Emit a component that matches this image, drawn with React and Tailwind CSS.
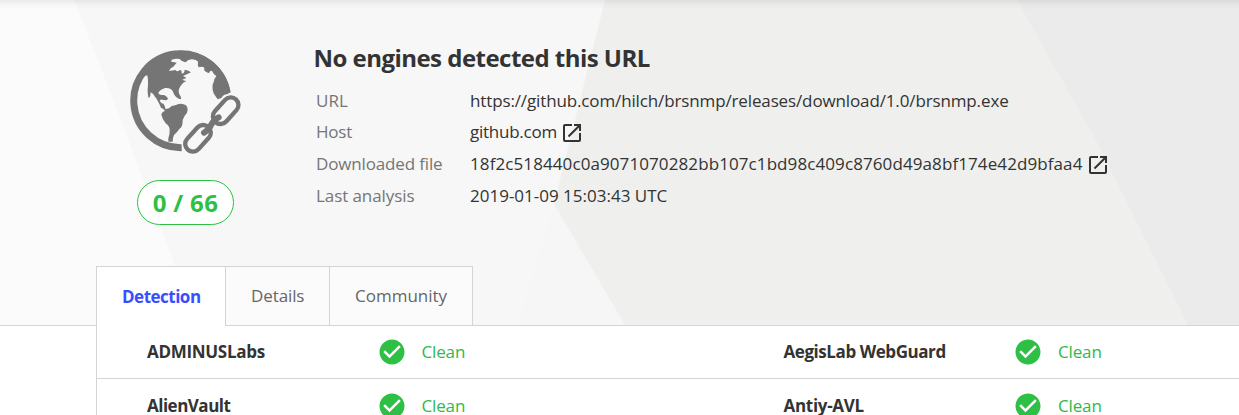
import React from 'react';
import { MdCheckCircle, MdOpenInNew } from 'react-icons/md';

function Backdrop() {
  return (
    <svg className="absolute inset-0 h-[325px] w-[1239px]" viewBox="0 0 1239 325" aria-hidden="true">
      <defs>
        <linearGradient id="top-shade" x1="0" y1="0" x2="0" y2="1">
          <stop offset="0" stopColor="#000" stopOpacity="0.07" />
          <stop offset="0.5" stopColor="#000" stopOpacity="0.02" />
          <stop offset="1" stopColor="#000" stopOpacity="0" />
        </linearGradient>
      </defs>
      <rect width="1239" height="325" fill="#f7f7f7" />
      <path d="M0 0H74L114 101L197 325H0Z" fill="#fbfbfb" />
      <path d="M554 204L518 325H640V204Z" fill="#f6f6f6" />
      <path d="M605 0L554 204L625 325H1239V0Z" fill="#efefed" />
      <path d="M1017 0L1097 142L1188 325H1239V0Z" fill="#ebebeb" />
      <rect width="1239" height="10" fill="url(#top-shade)" />
    </svg>
  );
}

function GlobeLink() {
  return (
    <svg className="h-[105px] w-[112px]" viewBox="59 57 336 315" fill="none" aria-hidden="true">
      <path d="M214 353A141 141 0 1 1 350 187" stroke="#757575" strokeWidth="21" />
      <path
        fill="#757575"
        d="M96 140L111 136Q114 150 113 165Q110 190 115 204Q120 204 121 187Q128 190 134 200Q141 208 144 216Q148 224 152 233Q160 236 164 243Q154 246 153 254Q156 268 166 280Q178 288 178 300Q179 312 174 325V335H187Q187 323 191 315Q202 305 207 297Q218 290 217 270Q221 258 230 248Q235 236 227 226Q218 220 205 222Q194 226 184 228Q176 238 166 238Q163 226 160 222Q151 220 148 212Q151 206 160 210Q170 212 173 206Q168 196 158 195Q145 195 144 188Q151 177 165 174Q182 172 188 185Q192 200 207 207Q216 209 210 198Q202 186 207 175Q213 160 228 153Q219 152 216 149L228 144Q222 140 218 138Q232 132 242 127Q232 119 223 119Q222 132 214 130Q215 120 208 120Q200 128 196 120L176 123Q180 113 189 110L199 98Q190 95 183 96L184 89Q196 84 208 87Q214 96 226 97Q231 90 243 88Q260 88 263 96Q261 106 265 112Q275 108 282 113Q280 124 289 126Q296 134 300 122L306 124Q309 134 318 138Q311 146 310 157Q305 164 307 180Q309 190 313 195L322 208L333 204Q339 194 350 193L361 187A150 150 0 0 0 212 62A150 150 0 0 0 82 138Z"
      />
      <g stroke="#757575" strokeWidth="13">
        <rect x="300" y="219" width="92" height="46" rx="23" transform="rotate(-48 346 242)" />
        <rect x="217" y="302" width="92" height="46" rx="23" transform="rotate(-48 263 325)" />
        <path d="M281 308Q299 296 303 283Q314 266 325 262" strokeWidth="18" strokeLinecap="round" />
      </g>
    </svg>
  );
}

function Info({ label, labelClass, children }) {
  return (
    <div className="flex h-[31.700px] items-center text-[17px] leading-8 whitespace-nowrap">
      <dt className={`w-[154px] shrink-0 text-[#757575] ${labelClass}`}>{label}</dt>
      <dd className="flex items-center text-[#333]">{children}</dd>
    </div>
  );
}

function Result({ name, nameClass }) {
  return (
    <div className="flex h-[52px] w-[636.500px] shrink-0 items-center text-[17px] whitespace-nowrap">
      <span className={`w-[229.500px] font-bold text-[#333] ${nameClass}`}>{name}</span>
      <MdCheckCircle className="mr-[15px] size-[30px] text-[#2dc044]" />
      <span className="tracking-[-0.150px] text-[#2eb94a]">Clean</span>
    </div>
  );
}

export default function App() {
  return (
    <main className="h-[415px] w-[1239px] overflow-hidden bg-white font-['Open_Sans','Noto_Sans',sans-serif]">
      <header className="relative h-[326px] border-b border-[#d4d4d4]">
        <Backdrop />
        <div className="relative flex h-[266px] pl-[130px]">
          <div className="flex w-[183.500px] flex-col pt-[49px]">
            <GlobeLink />
            <div className="mt-[26px] ml-[7px] flex h-[45px] w-[97px] items-center justify-center rounded-full border border-[#2dc044] bg-white text-[24px] font-bold tracking-[0.300px] text-[#2dc044]">
              0 / 66
            </div>
          </div>
          <div className="pt-10">
            <h1 className="h-[44.700px] text-[24px] leading-9 font-bold tracking-[-0.530px] text-[#333]">No engines detected this URL</h1>
            <dl className="pl-[2.500px]">
              <Info label="URL" labelClass="tracking-[0.080px]">
                <span className="tracking-[-0.130px]">https://github.com/hilch/brsnmp/releases/download/1.0/brsnmp.exe</span>
              </Info>
              <Info label="Host" labelClass="tracking-[-0.200px]">
                <span className="tracking-[-0.250px]">github.com</span>
                <MdOpenInNew className="mt-[2px] ml-[3px] size-6" />
              </Info>
              <Info label="Downloaded file" labelClass="tracking-[-0.150px]">
                <span className="tracking-[0.095px]">18f2c518440c0a9071070282bb107c1bd98c409c8760d49a8bf174e42d9bfaa4</span>
                <MdOpenInNew className="mt-[2px] ml-[3.500px] size-6" />
              </Info>
              <Info label="Last analysis" labelClass="pt-px tracking-[-0.080px]">
                <span className="pt-px">2019-01-09 15:03:43 UTC</span>
              </Info>
            </dl>
          </div>
        </div>
        <nav className="relative ml-24 flex h-[60px] w-[377px] border border-b-0 border-[#d4d4d4] text-[17px] leading-[57px] text-[#666]">
          <span className="w-[128px] bg-white pl-[25px] leading-[60px] font-bold tracking-[-0.500px] text-[#394eff]">Detection</span>
          <span className="h-[58px] w-[104px] border-l border-[#d4d4d4] bg-[#fbfbfb] pl-[25px] tracking-[-0.100px]">Details</span>
          <span className="h-[58px] w-[143px] border-l border-[#d4d4d4] bg-[#fbfbfb] pl-[25px]">Community</span>
        </nav>
      </header>
      <section className="ml-24 border-l border-[#d4d4d4]">
        <div className="flex h-[53px] border-b border-[#d4d4d4] pl-[50px]">
          <Result name="ADMINUSLabs" nameClass="tracking-[-0.300px]" />
          <Result name="AegisLab WebGuard" nameClass="tracking-[-0.430px]" />
        </div>
        <div className="flex h-[53px] pt-px pl-[50px]">
          <Result name="AlienVault" nameClass="tracking-[-0.500px]" />
          <Result name="Antiy-AVL" nameClass="tracking-[-0.300px]" />
        </div>
      </section>
    </main>
  );
}
